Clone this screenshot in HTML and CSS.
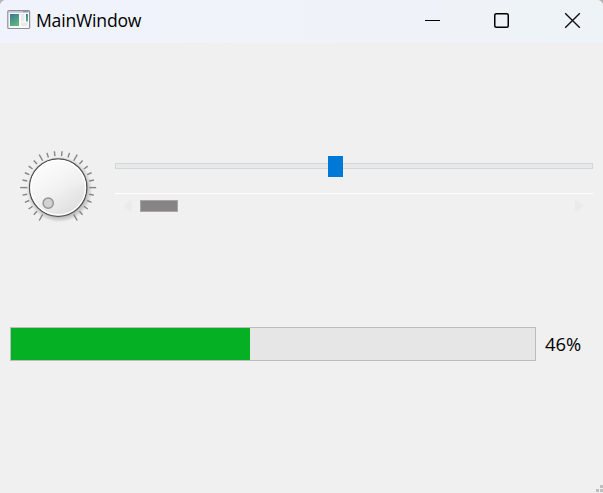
FILE: index.html
```
<!DOCTYPE html>
<html lang="en">
<head>
<meta charset="utf-8">
<title>MainWindow</title>
<link rel="stylesheet" href="styles.css">
</head>
<body>
<div class="window">
  <header class="titlebar">
    <svg class="app-icon" width="24" height="20" viewBox="0 0 24 20">
      <defs>
        <linearGradient id="pane" x1="0" y1="0" x2=".5" y2="1"><stop offset="0" stop-color="#3973a0"/><stop offset="1" stop-color="#5bb878"/></linearGradient>
      </defs>
      <rect x=".8" y=".7" width="21.8" height="17.8" rx="1" fill="#f8f8f9" stroke="#8b8f98" stroke-width="1.2"/>
      <path d="M1.5 1.9h20.4" stroke="#b6bac5" stroke-width="1.3"/>
      <path d="M16 1.7h5" stroke="#7d8db5"/>
      <rect x="3" y="4" width="9" height="12" fill="url(#pane)"/>
      <path d="M14 4h3.5v7H14zM14 12.5h6.5V16H14z" fill="#e8e9ea"/>
      <rect x="19" y="4" width="2" height="7.5" fill="url(#pane)"/>
    </svg>
    <h1 class="title">MainWindow</h1>
    <div class="controls">
      <svg width="70" height="42" viewBox="0 0 70 42"><path d="M28 20.5h15" stroke="#000"/></svg>
      <svg width="70" height="42" viewBox="0 0 70 42"><rect x="27.75" y="13.75" width="13.5" height="13.5" rx="1.5" fill="none" stroke="#000" stroke-width="1.5"/></svg>
      <svg width="66" height="42" viewBox="0 0 66 42"><path d="M28.2 13.2l14.6 14.6M42.8 13.2L28.2 27.8" stroke="#111" stroke-width="1.4"/></svg>
    </div>
  </header>
  <main class="content">
    <section class="inputs">
      <svg class="dial" width="84" height="84" viewBox="-42.2 -41.6 84 84">
        <defs>
          <linearGradient id="face" x1="0" y1="0" x2=".7" y2="1"><stop offset="0" stop-color="#fff"/><stop offset=".45" stop-color="#f7f7f7"/><stop offset="1" stop-color="#dedede"/></linearGradient>
          <linearGradient id="gloss" x1="0" y1="0" x2=".8" y2="1"><stop offset="0" stop-color="#fff"/><stop offset="1" stop-color="#ececec"/></linearGradient>
          <radialGradient id="shadow"><stop offset=".82" stop-color="#000" stop-opacity=".24"/><stop offset="1" stop-color="#000" stop-opacity="0"/></radialGradient>
          <path id="major" d="M0-31v-7"/>
          <path id="minor" d="M0-31.7v-4.8"/>
          <g id="step">
            <use href="#major"/>
            <use href="#minor" transform="rotate(12)"/>
            <use href="#minor" transform="rotate(24)"/>
            <use href="#minor" transform="rotate(36)"/>
            <use href="#minor" transform="rotate(48)"/>
          </g>
        </defs>
        <circle cx="1.2" cy="1.8" r="33" fill="url(#shadow)"/>
        <g stroke="#858585" stroke-width="1.4">
          <use href="#step" transform="rotate(-150)"/>
          <use href="#step" transform="rotate(-90)"/>
          <use href="#step" transform="rotate(-30)"/>
          <use href="#step" transform="rotate(30)"/>
          <use href="#step" transform="rotate(90)"/>
          <use href="#major" transform="rotate(150)"/>
        </g>
        <circle r="28.7" fill="url(#face)" stroke="#505050" stroke-width="1.3"/>
        <path d="M-26.5 7A27.4 27.4 0 1 1 27.2-3C18-2 13 0 5 4S-13 10-26.5 7Z" fill="url(#gloss)" opacity=".6"/>
        <circle r="27.3" fill="none" stroke="#fff" stroke-width="1.3"/>
        <circle cx="-10" cy="15.5" r="5.1" fill="#d2d2d2" stroke="#959595" stroke-width="1.5"/>
      </svg>
      <div class="bars">
        <div class="slider"><span class="groove"></span><span class="handle"></span></div>
        <div class="scrollbar">
          <svg class="arrow" width="10" height="14" viewBox="0 0 10 14"><path d="M10 1v12L7 12 1 7l6-5z" fill="#ebebeb"/></svg>
          <span class="thumb"></span>
          <svg class="arrow arrow-right" width="10" height="14" viewBox="0 0 10 14"><path d="M0 1v12l3-1 6-5-6-5z" fill="#ebebeb"/></svg>
        </div>
      </div>
    </section>
    <section class="progress">
      <div class="track"><div class="fill"></div></div>
      <span class="percent">46%</span>
    </section>
  </main>
  <svg class="grip" width="8" height="8" viewBox="0 0 8 8"><path d="M4 0h3v3H4zM0 4h3v3H0zM4 4h3v3H4z" fill="#bfbfbf"/></svg>
</div>
</body>
</html>
```
FILE: styles.css
```
* { box-sizing: border-box; }
body { margin: 0; background: #b5b5b5; overflow: hidden; }
svg { display: block; flex: none; }
.window {
  position: relative;
  display: flex;
  flex-direction: column;
  height: 493px;
  background: #f0f0f0;
  border-radius: 6px 6px 0 0;
  font-family: "Open Sans", "Noto Sans", sans-serif;
  color: #000;
}
.titlebar {
  display: flex;
  height: 43px;
  padding-left: 7px;
  background: linear-gradient(90deg, #f0f3fb, #eff3f9 60%, #eef3f7);
  border-radius: 6px 6px 0 0;
}
.app-icon { margin-top: 10px; }
.title {
  margin: 0 0 0 5px;
  font-size: 17.6px;
  font-weight: 400;
  line-height: 41px;
  letter-spacing: -.2px;
}
.controls { display: flex; margin-left: auto; margin-right: 0; }
.content { display: flex; flex-direction: column; padding: 103px 10px 0; }
.inputs { display: flex; height: 84px; gap: 15px; padding-left: 6px; }
.bars { flex: 1; padding-top: 8px; }
.slider { position: relative; height: 39px; padding-top: 9px; }
.groove {
  display: block;
  height: 6px;
  background: #e7eaea;
  border: 1px solid #d6d6d6;
}
.handle {
  position: absolute;
  left: 213px;
  top: 2px;
  width: 15px;
  height: 21px;
  background: #0078d7;
}
.scrollbar {
  display: flex;
  align-items: center;
  height: 25px;
  padding: 0 8px 0 7px;
  border-top: 1px solid #fff;
}
.thumb {
  width: 38px;
  height: 12px;
  margin-left: 8px;
  background: #858585;
  border: 1px solid #aaa4a4;
}
.arrow-right { margin-left: auto; }
.progress { display: flex; align-items: center; height: 34px; margin-top: 97px; }
.track {
  width: 526px;
  height: 34px;
  background: #e6e6e6;
  border: 1px solid #bcbcbc;
}
.fill { width: 239px; height: 32px; background: #06b025; }
.percent { margin-left: 9px; font-size: 18.4px; line-height: 34px; }
.grip { position: absolute; right: -1px; bottom: 0; }
```
